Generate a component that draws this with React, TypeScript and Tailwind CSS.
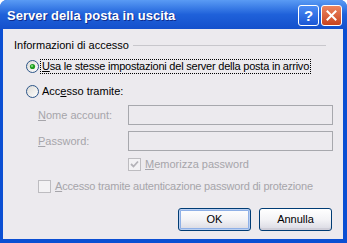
import React from 'react';

const font = { fontFamily: '"Liberation Sans", Arial, sans-serif' };

const Radio = ({ checked }: { checked?: boolean }) => (
  <svg width="13" height="13" viewBox="0 0 13 13" className="shrink-0">
    <defs>
      <linearGradient id={checked ? 'rg1' : 'rg2'} x1="0" y1="0" x2="1" y2="1">
        <stop offset="0" stopColor="#dcdad5" />
        <stop offset="1" stopColor="#ffffff" />
      </linearGradient>
    </defs>
    <circle cx="6.5" cy="6.5" r="6" fill={`url(#${checked ? 'rg1' : 'rg2'})`} stroke="#2c5588" strokeWidth="1" />
    {checked && (
      <>
        <circle cx="6.5" cy="6.5" r="2.6" fill="#1e9a1e" />
        <circle cx="6" cy="6" r="1.2" fill="#6fd46f" />
      </>
    )}
  </svg>
);

const CheckBox = ({ checked }: { checked?: boolean }) => (
  <div className="w-[13px] h-[13px] shrink-0 border border-[#bdbcc0] bg-[#f3f2f4] flex items-center justify-center">
    {checked && (
      <svg width="9" height="9" viewBox="0 0 9 9">
        <path d="M1 4 L3.5 6.5 L8 1.5" fill="none" stroke="#b4b3b8" strokeWidth="1.8" />
      </svg>
    )}
  </div>
);

export default function App() {
  return (
    <div className="w-[347px] h-[243px] bg-white" style={font}>
      <div className="w-[347px] h-[243px] flex flex-col rounded-t-[7px] bg-[#0b4fd3] overflow-hidden">
        {/* title bar */}
        <div className="h-[29px] shrink-0 flex items-center pt-[1px] pl-[7px] pr-[5px] bg-gradient-to-b from-[#5a9bf4] via-[#1f61da] to-[#1450cc]">
          <span
            className="flex-1 text-white font-bold text-[13px] leading-[15px] [text-shadow:1px_1px_0_#0e2c8c]"
          >
            Server della posta in uscita
          </span>
          <div className="w-[21px] h-[21px] rounded-[3px] border border-white bg-gradient-to-b from-[#4d8cf3] to-[#1a56d6] flex items-center justify-center text-white font-bold text-[15px] leading-none">
            ?
          </div>
          <div className="w-[21px] h-[21px] ml-[2px] rounded-[3px] border border-white bg-gradient-to-b from-[#ec8560] to-[#c9421c] flex items-center justify-center">
            <svg width="11" height="11" viewBox="0 0 11 11">
              <path d="M1.5 1.5 L9.5 9.5 M9.5 1.5 L1.5 9.5" stroke="white" strokeWidth="2" strokeLinecap="square" />
            </svg>
          </div>
        </div>

        {/* client area */}
        <div className="flex-1 ml-[3px] mr-[4px] mb-[4px] bg-[#eceaee] flex flex-col text-[11px] leading-[13px] text-black">
          <div className="mt-[10px] h-[13px] flex items-center pl-[11px] pr-[17px]">
            <span>Informazioni di accesso</span>
            <div className="flex-1 ml-[4px] h-px bg-[#c8c7cc]" />
          </div>

          <div className="mt-[8px] h-[13px] flex items-center pl-[23px]">
            <Radio checked />
            <span className="ml-[2px] px-[1px] outline outline-1 outline-dotted outline-black tracking-[-0.22px]">
              <u>U</u>sa le stesse impostazioni del server della posta in arrivo
            </span>
          </div>

          <div className="mt-[12px] h-[13px] flex items-center pl-[23px]">
            <Radio />
            <span className="ml-[3px]">
              Acc<u>e</u>sso tramite:
            </span>
          </div>

          <div className="mt-[7px] h-[20px] flex items-center pl-[35px] pr-[10px] text-[#a6a5aa]">
            <span className="w-[90px]">
              <u>N</u>ome account:
            </span>
            <div className="flex-1 h-[20px] border border-[#a7a8ad] bg-[#eceaee]" />
          </div>

          <div className="mt-[6px] h-[20px] flex items-center pl-[35px] pr-[10px] text-[#a6a5aa]">
            <span className="w-[90px]">
              <u>P</u>assword:
            </span>
            <div className="flex-1 h-[20px] border border-[#a7a8ad] bg-[#eceaee]" />
          </div>

          <div className="mt-[7px] h-[13px] flex items-center pl-[125px] text-[#a6a5aa]">
            <CheckBox checked />
            <span className="ml-[4px]">
              <u>M</u>emorizza password
            </span>
          </div>

          <div className="mt-[9px] h-[13px] flex items-center pl-[35px] text-[#a6a5aa]">
            <CheckBox />
            <span className="ml-[4px] tracking-[-0.2px]">
              <u>A</u>ccesso tramite autenticazione password di protezione
            </span>
          </div>

          <div className="mt-[15px] flex justify-end gap-[8px] pr-[11px]">
            <button className="w-[73px] h-[23px] rounded-[3px] border border-[#003c74] bg-gradient-to-b from-white via-[#f3f3f6] to-[#d9d9e2] shadow-[inset_0_0_0_1px_#b9cff2,inset_0_0_0_2px_#8fb0e6] text-[11px] text-black">
              OK
            </button>
            <button className="w-[73px] h-[23px] rounded-[3px] border border-[#003c74] bg-gradient-to-b from-white via-[#f3f3f6] to-[#d9d9e2] shadow-[inset_0_-2px_0_#cfced8] text-[11px] text-black">
              Annulla
            </button>
          </div>
        </div>
      </div>
    </div>
  );
}
